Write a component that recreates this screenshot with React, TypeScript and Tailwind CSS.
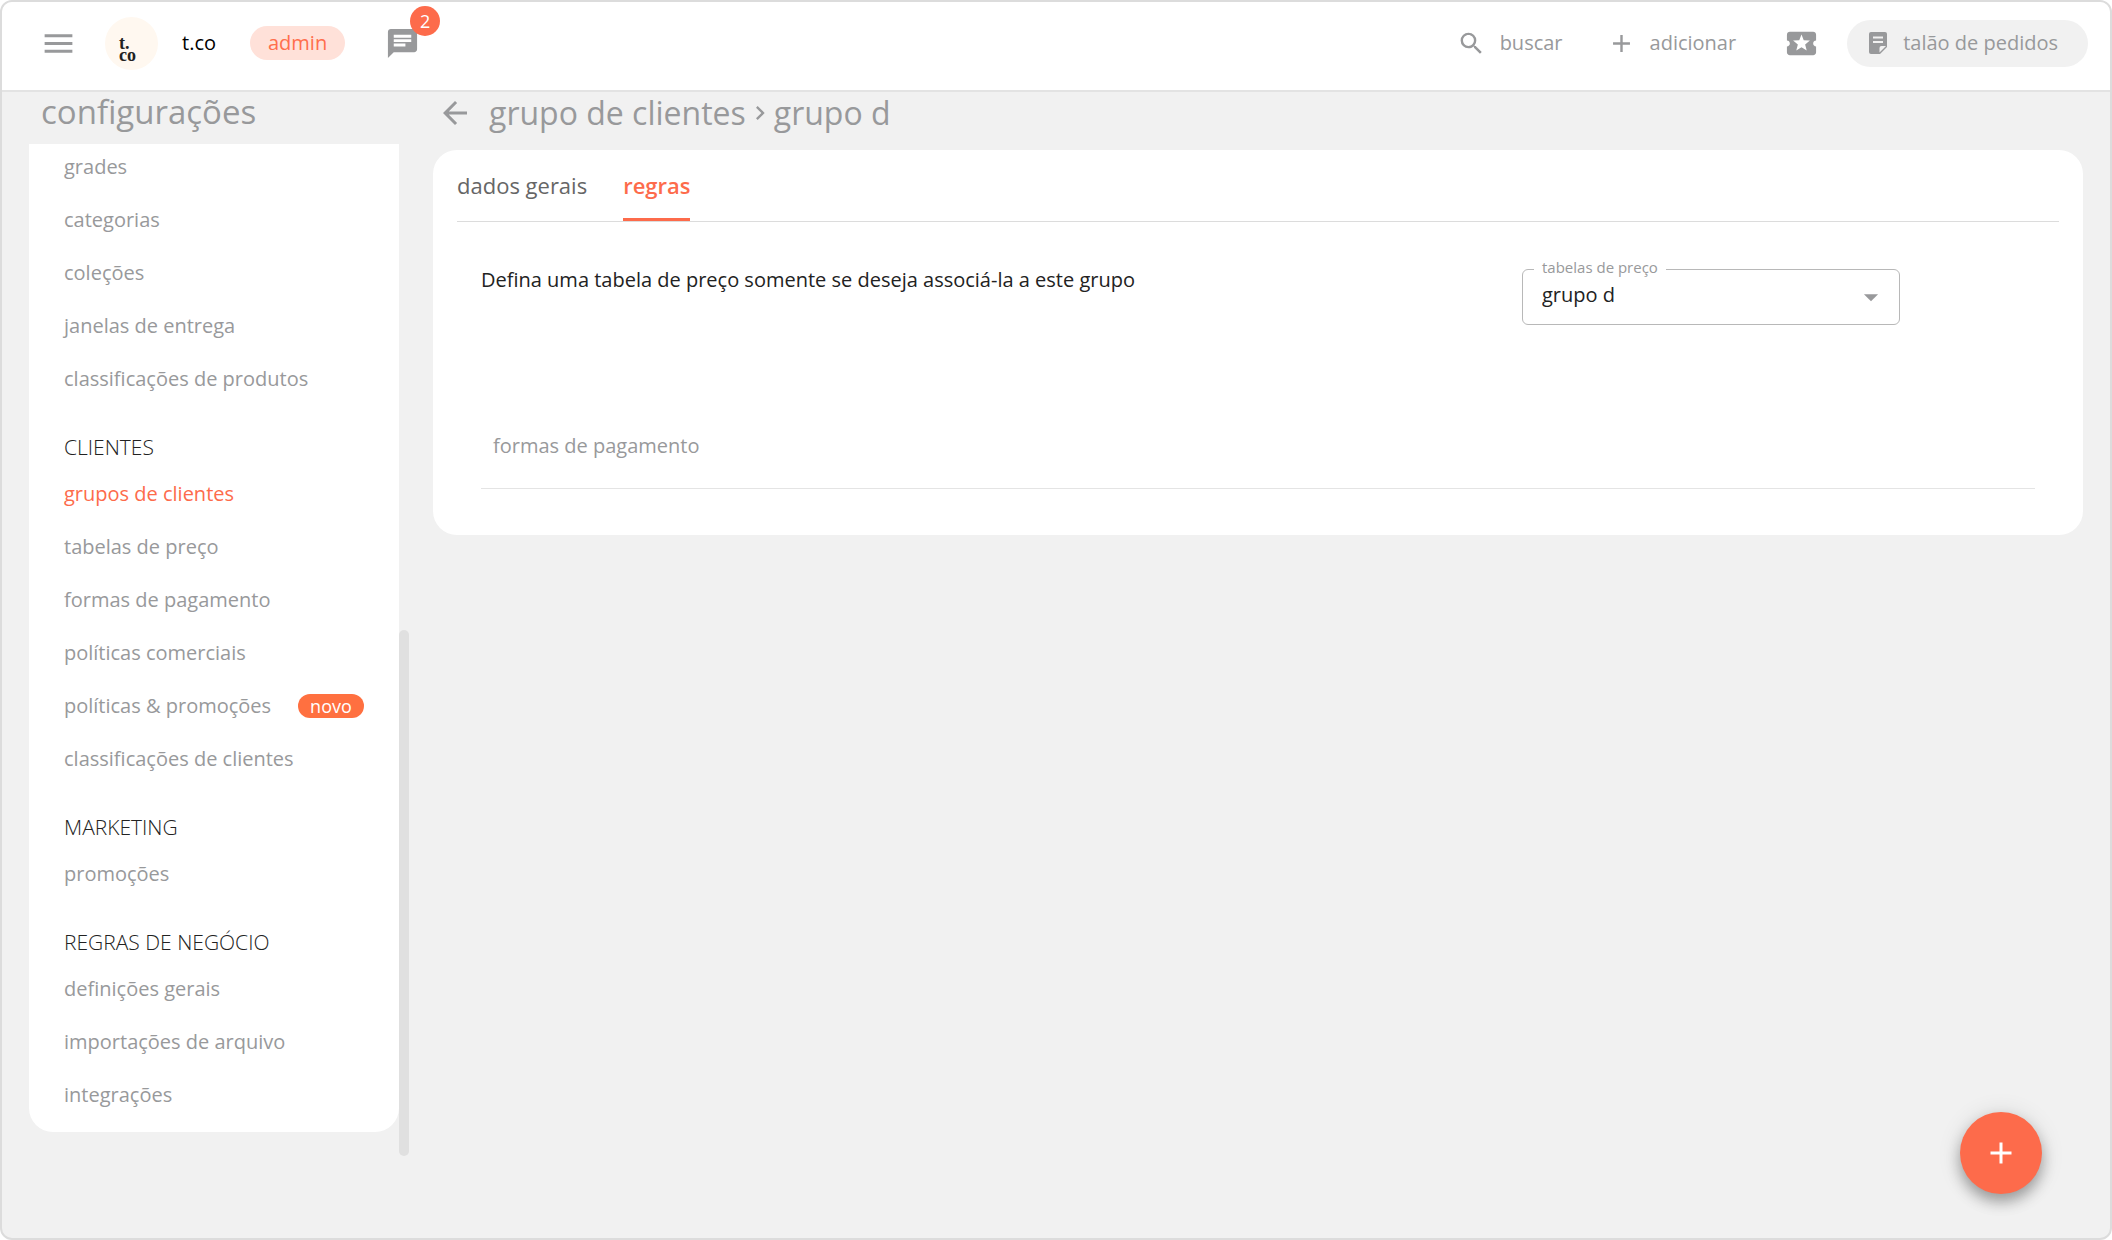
import { MdAdd, MdArrowBack, MdArrowDropDown, MdChat, MdChevronRight, MdLocalActivity, MdMenu, MdSearch } from "react-icons/md";

type Item = { label: string; active?: boolean; isNew?: boolean };
type Section = { title?: string; items: Item[] };

const sections: Section[] = [
  {
    items: [
      { label: "grades" },
      { label: "categorias" },
      { label: "coleções" },
      { label: "janelas de entrega" },
      { label: "classificações de produtos" },
    ],
  },
  {
    title: "CLIENTES",
    items: [
      { label: "grupos de clientes", active: true },
      { label: "tabelas de preço" },
      { label: "formas de pagamento" },
      { label: "políticas comerciais" },
      { label: "políticas & promoções", isNew: true },
      { label: "classificações de clientes" },
    ],
  },
  { title: "MARKETING", items: [{ label: "promoções" }] },
  {
    title: "REGRAS DE NEGÓCIO",
    items: [
      { label: "definições gerais" },
      { label: "importações de arquivo" },
      { label: "integrações" },
    ],
  },
];

const NoteIcon = () => (
  <svg viewBox="0 0 18 22" className="h-[22px] w-[18px]" aria-hidden="true">
    <path
      fill="currentColor"
      d="M2 0h14a2 2 0 0 1 2 2v13l-7 7H2a2 2 0 0 1-2-2V2a2 2 0 0 1 2-2z"
    />
    <path stroke="#f1f1f1" strokeWidth="1.8" d="M4 5.5h10M4 10h10" />
    <path fill="#f1f1f1" d="M10.5 20.5V16a2 2 0 0 1 2-2h4.5z" />
  </svg>
);

const Header = () => {
  return (
    <header className="flex h-[90px] items-start justify-between border-b-2 border-[#e3e3e3] bg-white pr-[22px] pl-[38px]">
      <div className="flex h-[82px] items-center">
        <button aria-label="menu" className="text-[#98999b]">
          <MdMenu size={37} />
        </button>
        <div className="ml-7 flex size-[53px] items-center justify-center rounded-full bg-[#fff8f0]">
          <div className="flex flex-col pt-3 pr-2 font-['Liberation_Serif',serif] text-lg font-bold text-[#222]">
            <span className="leading-3">t.</span>
            <span className="leading-3">co</span>
          </div>
        </div>
        <span className="ml-6 text-xl text-black">t.co</span>
        <span className="ml-[34px] flex h-[34px] items-center rounded-full bg-[#ffe1d9] px-[18px] text-xl text-[#ff6e4c]">
          admin
        </span>
        <button aria-label="mensagens" className="relative ml-10 text-[#98999b]">
          <MdChat size={35} />
          <span className="absolute -top-5 -right-5 flex size-[30px] items-center justify-center rounded-full bg-[#fd6b4b] text-lg text-white">
            2
          </span>
        </button>
      </div>
      <div className="flex h-[82px] items-center text-xl text-[#98999b]">
        <button className="flex items-center gap-[14px]">
          <MdSearch size={29} />
          buscar
        </button>
        <button className="ml-11 flex items-center gap-[14px]">
          <MdAdd size={29} />
          adicionar
        </button>
        <button aria-label="promoções" className="ml-12">
          <MdLocalActivity size={35} />
        </button>
        <button className="ml-7 flex h-[47px] items-center gap-4 rounded-full bg-[#f1f1f1] pr-[30px] pl-[22px]">
          <NoteIcon />
          talão de pedidos
        </button>
      </div>
    </header>
  );
};

const Sidebar = () => {
  return (
    <aside className="w-[380px] shrink-0">
      <h1 className="flex h-[52px] items-center pb-3 pl-3 text-[33px] text-[#98999b]">
        configurações
      </h1>
      <div className="flex">
        <div className="flex-1 pb-6">
          <nav className="overflow-hidden rounded-b-3xl bg-white pb-[11px] pl-[35px]">
            {sections.map((section, i) => (
              <div key={i} className={i === 0 ? "-mt-1" : "mt-[23px]"}>
                {section.title && (
                  <h2 className="flex h-[39px] items-center text-[21px] font-light text-[#222]">
                    {section.title}
                  </h2>
                )}
                <ul>
                  {section.items.map((item) => (
                    <li key={item.label} className="flex h-[53px] items-center gap-[27px] text-xl">
                      <a href="#" className={item.active ? "text-[#fd6b4b]" : "text-[#98999b]"}>
                        {item.label}
                      </a>
                      {item.isNew && (
                        <span className="flex h-6 items-center rounded-full bg-[#ff7040] px-3 text-lg text-white">
                          novo
                        </span>
                      )}
                    </li>
                  ))}
                </ul>
              </div>
            ))}
          </nav>
        </div>
        <div className="flex w-[10px] flex-col justify-end">
          <div className="h-[52%] rounded-full bg-[#e0e0e0]" />
        </div>
      </div>
    </aside>
  );
};

const Rules = () => {
  return (
    <section className="rounded-3xl bg-white px-6 pb-[46px]">
      <div role="tablist" className="flex h-[72px] gap-9 border-b border-[#dcdcdc] text-[22px]">
        <button role="tab" aria-selected="false" className="text-[#666]">
          dados gerais
        </button>
        <button role="tab" aria-selected="true" className="border-b-[3px] border-[#fd6b4b] pt-[3px] font-semibold text-[#fd6b4b]">
          regras
        </button>
      </div>
      <div className="px-6">
        <div className="flex items-start justify-between pt-[46px] pr-[135px]">
          <p className="text-xl leading-6 font-medium text-[#222]">
            Defina uma tabela de preço somente se deseja associá-la a este grupo
          </p>
          <div className="relative mt-px w-[378px]">
            <label htmlFor="price-table" className="absolute -top-3 left-3 bg-white px-2 text-[15px] leading-5 text-[#98999b]">
              tabelas de preço
            </label>
            <select
              id="price-table"
              className="h-[56px] w-full appearance-none rounded-md border border-[#b8b8b8] bg-white pb-1 pl-[19px] text-xl text-[#222]"
            >
              <option>grupo d</option>
            </select>
            <MdArrowDropDown size={34} className="pointer-events-none absolute top-[11px] right-3 text-[#98999b]" />
          </div>
        </div>
        <h3 className="mt-[107px] border-b border-[#e4e4e4] pb-7 pl-3 text-xl leading-7 text-[#98999b]">
          formas de pagamento
        </h3>
      </div>
    </section>
  );
};

const App = () => {
  return (
    <div className="bg-white font-['Open_Sans','Noto_Sans',sans-serif]">
      <div className="relative flex min-h-screen flex-col overflow-hidden rounded-xl border-2 border-[#dcdcdc] bg-[#f1f1f1]">
        <Header />
        <div className="flex gap-6 px-[27px]">
          <Sidebar />
          <main className="min-w-0 flex-1">
            <div className="flex h-[58px] items-center pb-4 pl-1 text-[32px] text-[#98999b]">
              <button aria-label="voltar" className="mr-4">
                <MdArrowBack size={36} />
              </button>
              <a href="#">grupo de clientes</a>
              <MdChevronRight size={28} />
              <span>grupo d</span>
            </div>
            <Rules />
          </main>
        </div>
        <button
          aria-label="novo"
          className="absolute right-[68px] bottom-[44px] flex size-[82px] items-center justify-center rounded-full bg-[#fd6b4b] text-white shadow-[0_8px_14px_rgba(0,0,0,0.3),0_2px_24px_rgba(0,0,0,0.12)]"
        >
          <MdAdd size={36} />
        </button>
      </div>
    </div>
  );
};

export default App;
